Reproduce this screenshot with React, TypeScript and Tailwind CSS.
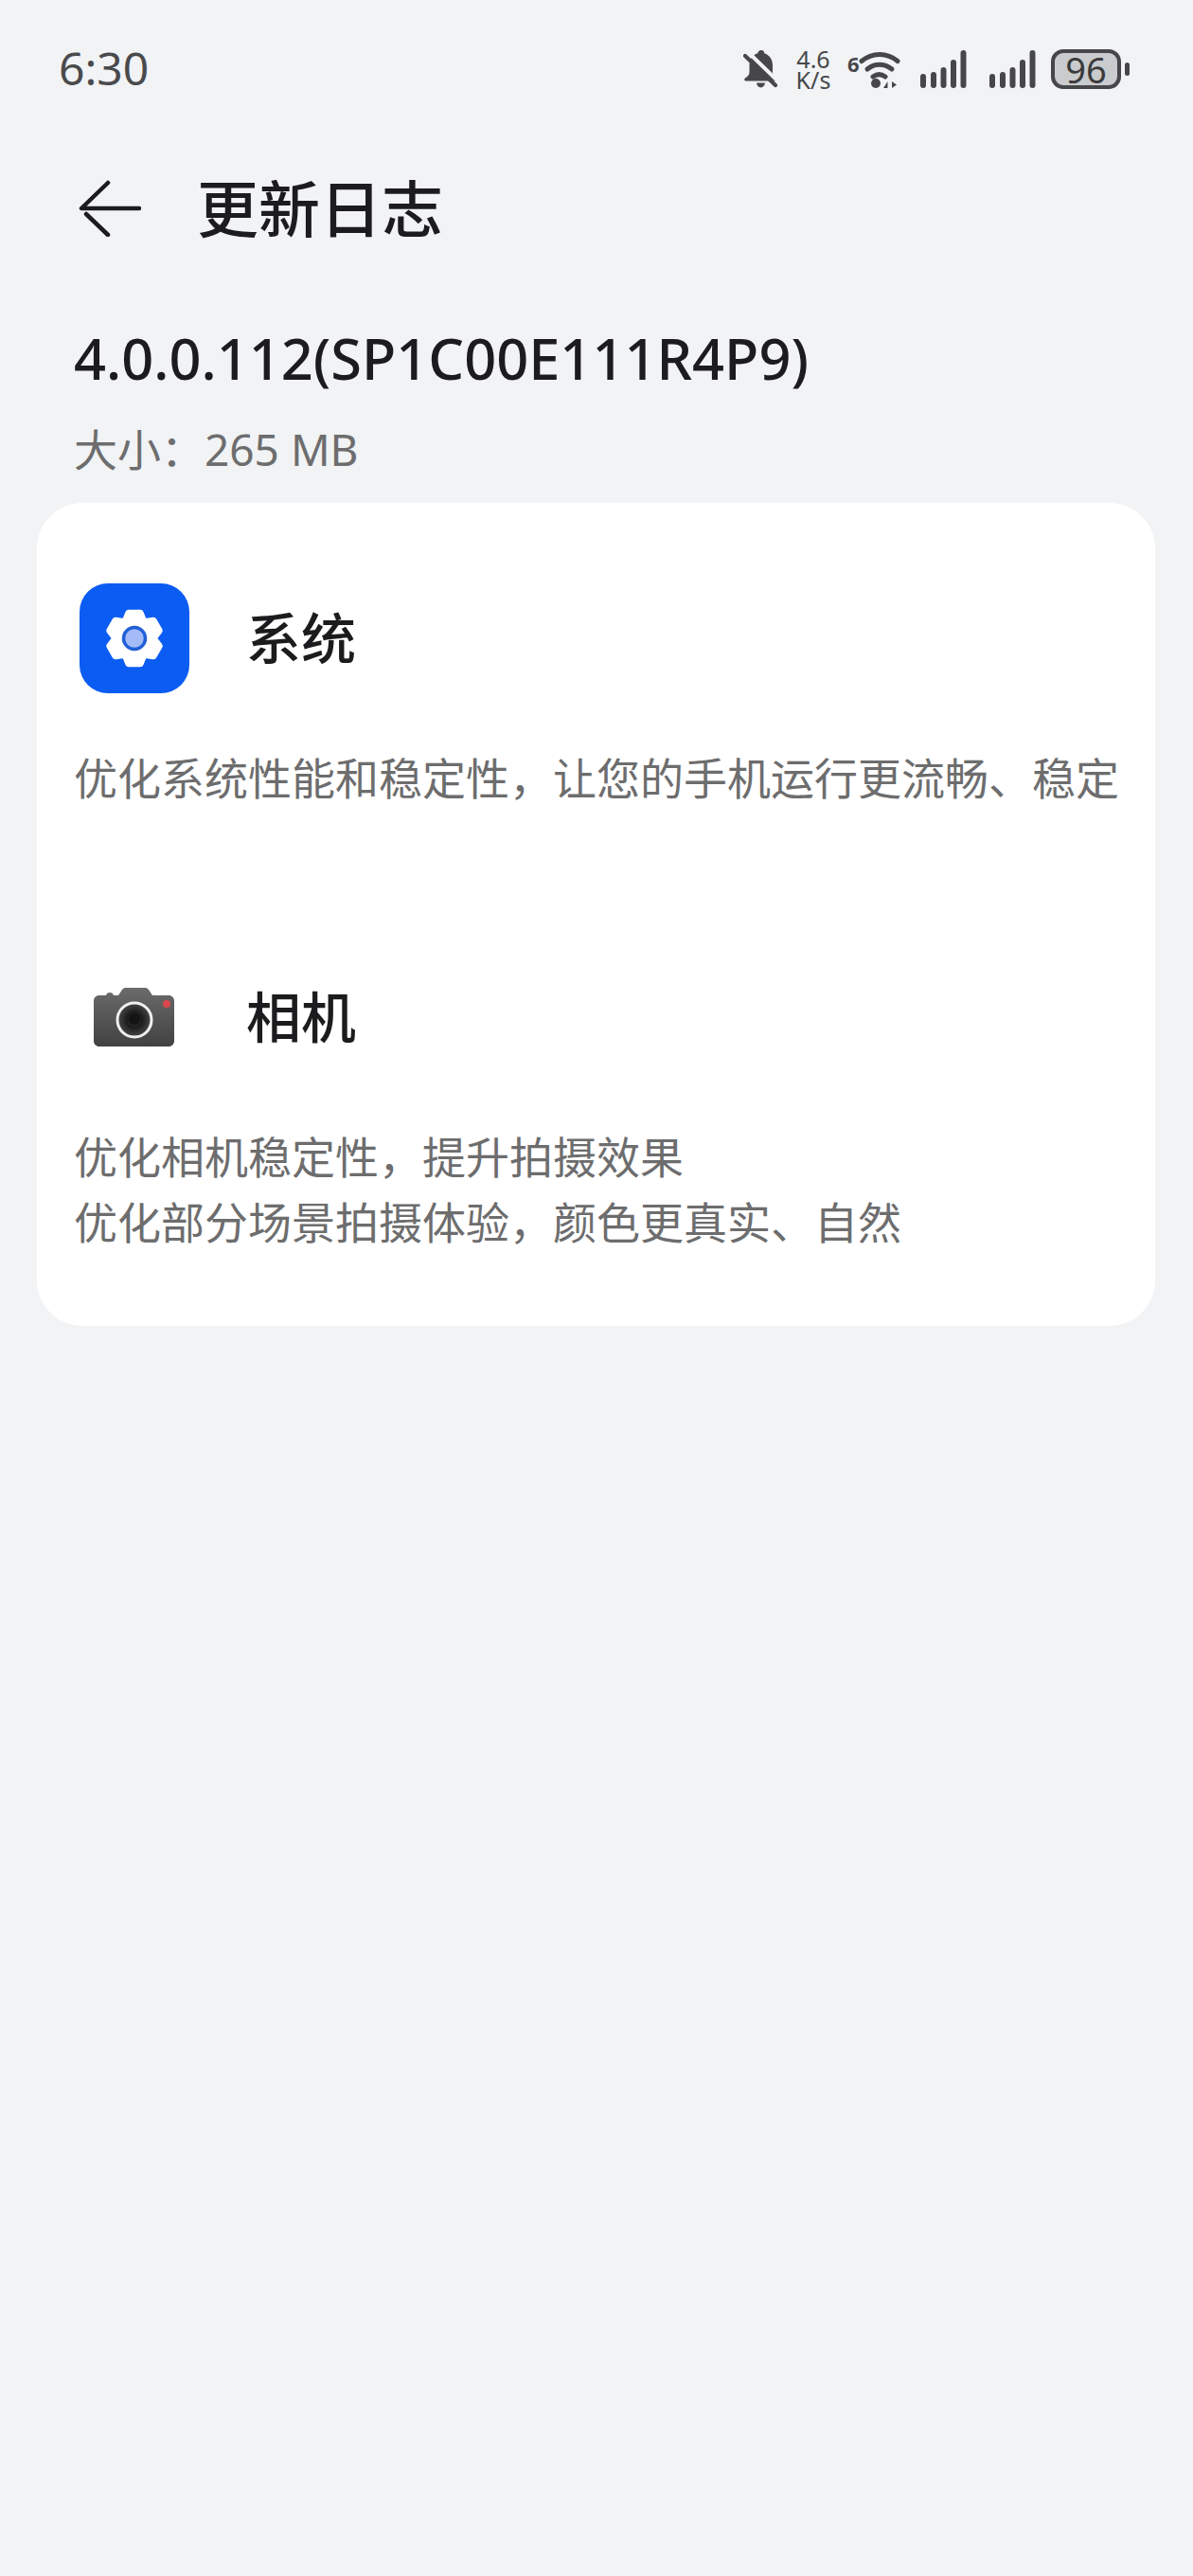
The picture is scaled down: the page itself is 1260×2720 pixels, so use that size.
const sans = "font-['Noto_Sans','Noto_Sans_CJK_SC',sans-serif]";

// six rounded lobes, pointing up and down, notched at left and right
const gearPoints = [0, 60, 120, 180, 240, 300]
  .flatMap((deg) => [
    [deg - 13, 27.5],
    [deg + 13, 27.5],
    [deg + 30, 20],
  ])
  .map(([deg, r]) => {
    const a = ((deg - 90) * Math.PI) / 180;
    return `${(32 + r * Math.cos(a)).toFixed(2)},${(32 + r * Math.sin(a)).toFixed(2)}`;
  })
  .join(" ");

function BellOff() {
  return (
    <svg width="37" height="40" viewBox="0 0 37 40" fill="#47474a">
      <path d="M19 0c-2 0-3.500 1.300-3.800 3.200C9.500 5 6.500 10 6.500 16v7.500c0 2.500-2.200 4.500-4.500 6-1.500 1-.8 3 1 3h31c1.800 0 2.500-2 1-3-2.300-1.500-4-3.500-4-6V16c0-6-3.200-11-8.800-12.800C22.500 1.300 21 0 19 0z" />
      <path d="M14 34.500h9c-.3 2.800-2.200 5-4.500 5s-4.200-2.200-4.500-5z" />
      <path d="M-2 3l34 33" stroke="#f1f3f5" strokeWidth="4" transform="translate(4 -4)" />
      <path d="M2 6l32 31" stroke="#47474a" strokeWidth="4.200" strokeLinecap="round" />
    </svg>
  );
}

function Wifi() {
  return (
    <svg width="44" height="41" viewBox="0 0 44 41" fill="none" stroke="#47474a" strokeWidth="5" strokeLinecap="round">
      <path d="M3 11.500C14 2 30 2 41 11.500" />
      <path d="M9 20c7.500-6.500 18-6.500 26 0" />
      <path d="M15 28c4-3 9-3 13 0" />
      <circle cx="18" cy="35" r="5" fill="#47474a" stroke="none" />
      <path d="M26 40l4.500-7v7zM35 33v7l5-3.500z" fill="#47474a" stroke="none" />
    </svg>
  );
}

function Signal() {
  return (
    <svg width="49" height="40" viewBox="0 0 49 40" fill="#47474a">
      <rect x="0" y="25" width="6" height="15" rx="3" />
      <rect x="11" y="23" width="6" height="17" rx="3" />
      <rect x="21.500" y="18" width="6" height="22" rx="3" />
      <rect x="32" y="10" width="6" height="30" rx="3" />
      <rect x="42.500" y="0" width="6" height="40" rx="3" />
    </svg>
  );
}

function GearIcon() {
  return (
    <div className="flex h-[116px] w-[116px] items-center justify-center rounded-[30px] bg-[#0b5cf2]">
      <svg width="64" height="64" viewBox="0 0 64 64">
        <polygon points={gearPoints} fill="#ffffff" stroke="#ffffff" strokeWidth="7" strokeLinejoin="round" />
        <circle cx="32" cy="32" r="11.500" fill="#a3bcf8" stroke="#2160d6" strokeWidth="3.500" />
      </svg>
    </div>
  );
}

function CameraIcon() {
  return (
    <div className="flex h-[116px] w-[116px] items-center justify-center">
      <svg width="86" height="62" viewBox="0 0 86 62">
        <defs>
          <linearGradient id="camBody" x1="0" y1="0" x2="0" y2="1">
            <stop offset="0" stopColor="#6b6b6b" />
            <stop offset="1" stopColor="#414141" />
          </linearGradient>
          <radialGradient id="camLens">
            <stop offset="0" stopColor="#3a3a3a" />
            <stop offset="0.45" stopColor="#1c1c1c" />
            <stop offset="1" stopColor="#4a4a4a" />
          </radialGradient>
        </defs>
        <path
          fill="url(#camBody)"
          d="M6 8h7c.5-2 2-3 4-3s3.500 1 4 3h5l4-6c1-1.300 2-2 3.500-2h21c1.500 0 2.500.7 3.500 2l4 6h17c3.500 0 6 2.500 6 6v42c0 3.500-2.500 6-6 6H6c-3.500 0-6-2.500-6-6V14c0-3.500 2.500-6 6-6z"
        />
        <circle cx="43" cy="34" r="18" fill="url(#camLens)" stroke="#f0f0f0" strokeWidth="3" />
        <circle cx="43" cy="33" r="6" fill="#141414" />
        <circle cx="77" cy="17" r="4" fill="#d9474c" />
      </svg>
    </div>
  );
}

function Section({
  icon,
  title,
  lines,
  className,
}: {
  icon: React.ReactNode;
  title: string;
  lines: string[];
  className?: string;
}) {
  return (
    <div className={className}>
      <div className="flex items-center pl-[45px]">
        {icon}
        <h2 className="ml-[60px] text-[58px] leading-none font-medium text-[#1c1c1e]">{title}</h2>
      </div>
      <div className="mt-[55px] pl-[39px] text-[46px] leading-[69px] text-[#6d6d6e]">
        {lines.map((line) => (
          <p key={line} className="whitespace-nowrap">
            {line}
          </p>
        ))}
      </div>
    </div>
  );
}

export default function App() {
  return (
    <div className={`${sans} min-h-[2720px] w-[1260px] bg-[#f1f3f5]`}>
      {/* STATUS BAR */}
      <div className="flex h-[146px] items-start justify-between pt-[43px] pl-[62px] pr-[67px]">
        <span className="text-[48px] leading-[58px] text-[#4a4a4c]">6:30</span>
        <div className="mt-[8px] flex items-center">
          <BellOff />
          <div className="ml-[17px] flex w-[40px] flex-col items-center text-[25px] leading-[22px] text-[#47474a]">
            <span>4.6</span>
            <span>K/s</span>
          </div>
          <span className="mb-[12px] ml-[16px] w-[12px] text-[22px] leading-none font-bold text-[#47474a]">6</span>
          <Wifi />
          <div className="ml-[21px]">
            <Signal />
          </div>
          <div className="ml-[24px]">
            <Signal />
          </div>
          <div className="ml-[16px] flex h-[42px] w-[74px] items-center justify-center rounded-[13px] border-[4px] border-[#47474a] bg-[#cacbcd] text-[38px] leading-none text-[#3a3a3c]">
            96
          </div>
          <div className="ml-[4px] h-[14px] w-[5px] rounded-full bg-[#47474a]" />
        </div>
      </div>

      {/* HEADER */}
      <div className="flex h-[148px] items-center pl-[83px]">
        <svg width="66" height="60" viewBox="0 0 66 60" fill="none" stroke="#1c1c1e" strokeWidth="4.500" strokeLinecap="round" strokeLinejoin="round">
          <path d="M31 3L3 30h61" />
          <path d="M8 36l23 22" />
        </svg>
        <h1 className="ml-[59px] text-[65px] leading-none font-medium text-[#1c1c1e]">更新日志</h1>
      </div>

      {/* VERSION */}
      <div className="pt-[41px] pl-[78px]">
        <p className="text-[59.5px] leading-[86px] font-medium text-[#1c1c1e]">4.0.0.112(SP1C00E111R4P9)</p>
        <p className="mt-[18px] text-[46px] leading-[70px] text-[#6d6d6e]">大小：265 MB</p>
      </div>

      {/* CARD */}
      <div className="mx-[39px] mt-[22px] w-[1181px] rounded-[48px] bg-white pt-[85px] pb-[75px]">
        <Section icon={<GearIcon />} title="系统" lines={["优化系统性能和稳定性，让您的手机运行更流畅、稳定"]} />
        <Section
          className="mt-[160px]"
          icon={<CameraIcon />}
          title="相机"
          lines={["优化相机稳定性，提升拍摄效果", "优化部分场景拍摄体验，颜色更真实、自然"]}
        />
      </div>
    </div>
  );
}
